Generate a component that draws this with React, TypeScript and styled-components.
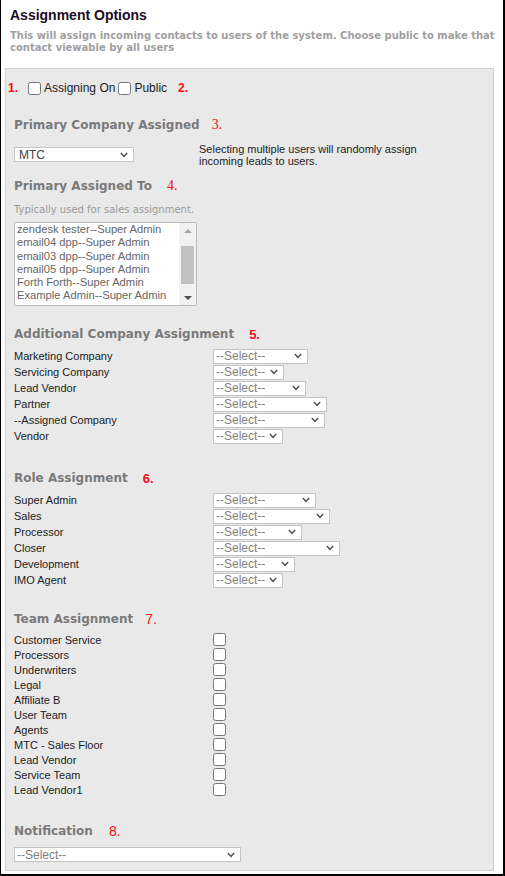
import styled, { createGlobalStyle } from "styled-components";

const Global = createGlobalStyle`
  html, body {
    margin: 0;
    padding: 0;
    background: #fff;
  }
`;

const Frame = styled.div`
  width: 505px;
  height: 876px;
  box-sizing: border-box;
  border-left: 1px solid #000;
  border-right: 2px solid #000;
  border-bottom: 2px solid #000;
  padding-left: 4px;
  font-family: "Liberation Sans", Arial, sans-serif;
`;

const Header = styled.div`
  padding: 7px 0 0 5px;
`;

const Title = styled.div`
  font-size: 14px;
  font-weight: bold;
  line-height: 16px;
  color: #1d0b1f;
`;

const Description = styled.div`
  margin-top: 7px;
  font-family: "DejaVu Sans", Verdana, sans-serif;
  font-size: 10px;
  font-weight: bold;
  line-height: 12px;
  color: #a0a0a0;
  width: 486px;
`;

const Panel = styled.div`
  margin-top: 14px;
  width: 489px;
  box-sizing: border-box;
  border: 1px solid #cfcfcf;
  background: #e9e9e9;
  padding: 11px 8px 8px 8px;
`;

const Num = styled.span<{ $font?: string; $size?: number; $bold?: boolean; $gap?: number }>`
  color: #ee1111;
  font-family: ${(p) => p.$font || '"Liberation Sans", Arial, sans-serif'};
  font-size: ${(p) => p.$size || 13}px;
  font-weight: ${(p) => (p.$bold ? "bold" : "normal")};
  margin-left: ${(p) => p.$gap ?? 14}px;
`;

const TopRow = styled.div`
  display: flex;
  align-items: center;
  height: 16px;
  margin-left: -6px;
  font-size: 12px;
  color: #222;
`;

const Check = styled.span`
  display: inline-block;
  width: 13px;
  height: 13px;
  box-sizing: border-box;
  border: 1px solid #767676;
  border-radius: 2.5px;
  background: #fff;
`;

const CheckLabel = styled.span`
  margin: 0 3px 0 3px;
`;

const Heading = styled.div<{ $top: number }>`
  margin-top: ${(p) => p.$top}px;
  display: flex;
  align-items: center;
  height: 16px;
  font-family: "DejaVu Sans", Verdana, sans-serif;
  font-size: 12px;
  font-weight: bold;
  color: #7a7a7a;
`;

const CompanyRow = styled.div`
  margin-top: 10px;
  display: flex;
  align-items: flex-start;
`;

const Note = styled.div`
  margin-left: 65px;
  font-size: 11px;
  line-height: 12px;
  color: #222;
  width: 230px;
`;

const SelectBox = styled.div<{ $w: number; $dark?: boolean; $top?: number }>`
  width: ${(p) => p.$w}px;
  height: 15px;
  box-sizing: border-box;
  margin-top: ${(p) => p.$top || 0}px;
  display: flex;
  align-items: center;
  justify-content: space-between;
  padding: 0 5px 0 ${(p) => (p.$dark ? 4 : 2)}px;
  border: 1px solid #c4c4c4;
  background: #fff;
  font-size: 12px;
  color: ${(p) => (p.$dark ? "#444" : "#808080")};
  flex-shrink: 0;
  white-space: nowrap;
`;

const Hint = styled.div`
  margin-top: 10px;
  font-family: "DejaVu Sans", Verdana, sans-serif;
  font-size: 10px;
  line-height: 12px;
  color: #9a9a9a;
`;

const ListBox = styled.div`
  margin-top: 6px;
  width: 183px;
  height: 84px;
  box-sizing: border-box;
  border: 1px solid #b8b8b8;
  border-radius: 2px;
  background: #fff;
  display: flex;
  overflow: hidden;
`;

const Options = styled.div`
  flex: 1;
  padding: 0 0 0 2px;
  font-size: 11.2px;
  line-height: 13.3px;
  color: #666;
  white-space: nowrap;
  overflow: hidden;
`;

const ScrollTrack = styled.div`
  width: 17px;
  background: #f1f1f1;
  display: flex;
  flex-direction: column;
  align-items: center;
  justify-content: space-between;
  padding: 5px 0 4px;
  box-sizing: border-box;
`;

const Thumb = styled.div`
  width: 13px;
  height: 38px;
  background: #c1c1c1;
`;

const Rows = styled.div<{ $top: number }>`
  margin-top: ${(p) => p.$top}px;
`;

const FieldRow = styled.div<{ $h: number }>`
  display: flex;
  align-items: center;
  height: ${(p) => p.$h}px;
`;

const FieldLabel = styled.div`
  width: 199px;
  font-size: 11px;
  color: #222;
  flex-shrink: 0;
`;

const Chevron = () => (
  <svg width="8" height="6" viewBox="0 0 8 6">
    <path d="M0.8 1 L4 4.3 L7.2 1" fill="none" stroke="#555" strokeWidth="1.5" />
  </svg>
);

const Select = ({ w, text = "--Select--", dark, top }: { w: number; text?: string; dark?: boolean; top?: number }) => (
  <SelectBox $w={w} $dark={dark} $top={top}>
    <span>{text}</span>
    <Chevron />
  </SelectBox>
);

const users = [
  "zendesk tester--Super Admin",
  "email04 dpp--Super Admin",
  "email03 dpp--Super Admin",
  "email05 dpp--Super Admin",
  "Forth Forth--Super Admin",
  "Example Admin--Super Admin",
];

const companies: [string, number][] = [
  ["Marketing Company", 95],
  ["Servicing Company", 71],
  ["Lead Vendor", 93],
  ["Partner", 114],
  ["--Assigned Company", 112],
  ["Vendor", 70],
];

const roles: [string, number][] = [
  ["Super Admin", 103],
  ["Sales", 117],
  ["Processor", 89],
  ["Closer", 127],
  ["Development", 82],
  ["IMO Agent", 70],
];

const teams = [
  "Customer Service",
  "Processors",
  "Underwriters",
  "Legal",
  "Affiliate B",
  "User Team",
  "Agents",
  "MTC - Sales Floor",
  "Lead Vendor",
  "Service Team",
  "Lead Vendor1",
];

export default function App() {
  return (
    <>
      <Global />
      <Frame>
        <Header>
          <Title>Assignment Options</Title>
          <Description>
            This will assign incoming contacts to users of the system. Choose public to make that contact viewable by all users
          </Description>
        </Header>
        <Panel>
          <TopRow>
            <Num $bold $size={12} $gap={0} style={{ marginRight: 10 }}>1.</Num>
            <Check />
            <CheckLabel>Assigning On</CheckLabel>
            <Check />
            <CheckLabel>Public</CheckLabel>
            <Num $bold $size={12} $gap={8}>2.</Num>
          </TopRow>

          <Heading $top={21}>
            Primary Company Assigned
            <Num $font='"Liberation Serif", "Times New Roman", serif' $size={14} $gap={12}>3.</Num>
          </Heading>
          <CompanyRow>
            <Select w={120} text="MTC" dark top={4} />
            <Note>Selecting multiple users will randomly assign incoming leads to users.</Note>
          </CompanyRow>

          <Heading $top={11}>
            Primary Assigned To
            <Num $font='"Liberation Serif", "Times New Roman", serif' $size={14} $gap={15}>4.</Num>
          </Heading>
          <Hint>Typically used for sales assignment.</Hint>
          <ListBox>
            <Options>
              {users.map((u) => (
                <div key={u}>{u}</div>
              ))}
            </Options>
            <ScrollTrack>
              <svg width="8" height="5" viewBox="0 0 8 5">
                <path d="M0 5 L4 1 L8 5 Z" fill="#a3a3a3" />
              </svg>
              <Thumb />
              <svg width="8" height="5" viewBox="0 0 8 5">
                <path d="M0 0 L4 4 L8 0 Z" fill="#505050" />
              </svg>
            </ScrollTrack>
          </ListBox>

          <Heading $top={20}>
            Additional Company Assignment
            <Num $bold $gap={15}>5.</Num>
          </Heading>
          <Rows $top={6}>
            {companies.map(([label, w]) => (
              <FieldRow key={label} $h={16}>
                <FieldLabel>{label}</FieldLabel>
                <Select w={w} />
              </FieldRow>
            ))}
          </Rows>

          <Heading $top={26}>
            Role Assignment
            <Num $bold $gap={15}>6.</Num>
          </Heading>
          <Rows $top={6}>
            {roles.map(([label, w]) => (
              <FieldRow key={label} $h={16}>
                <FieldLabel>{label}</FieldLabel>
                <Select w={w} />
              </FieldRow>
            ))}
          </Rows>

          <Heading $top={23}>
            Team Assignment
            <Num $size={14} $gap={12}>7.</Num>
          </Heading>
          <Rows $top={5}>
            {teams.map((t, i) => (
              <FieldRow key={t + i} $h={15}>
                <FieldLabel>{t}</FieldLabel>
                <Check />
              </FieldRow>
            ))}
          </Rows>

          <Heading $top={26}>
            Notification
            <Num $font='"Liberation Sans Narrow", "Liberation Sans", sans-serif' $size={14} $gap={16}>8.</Num>
          </Heading>
          <Select w={227} top={8} />
        </Panel>
      </Frame>
    </>
  );
}
